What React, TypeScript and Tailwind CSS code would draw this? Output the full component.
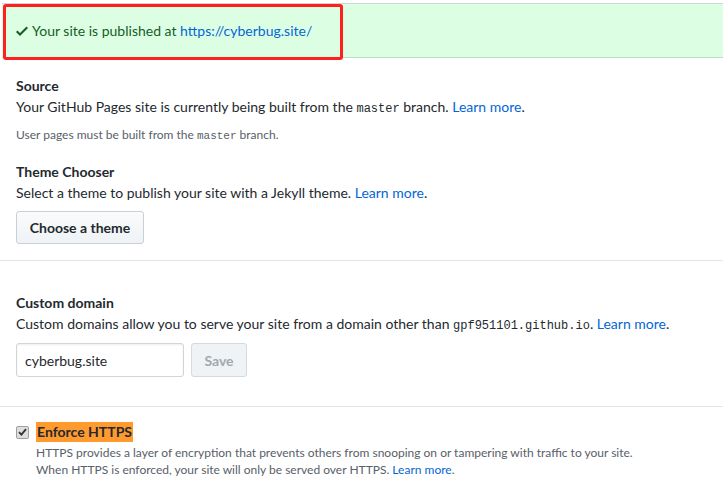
import React from "react";

const mono = "font-['Liberation_Mono',monospace] text-[12px] leading-none";

export default function App() {
  return (
    <div className="w-[723px] h-[496px] bg-white overflow-hidden text-[14px] text-[#24292e] font-['Lato',sans-serif]">
      <div className="pt-[3px]">
        <div className="relative ml-[2px] h-[55px] bg-[#dcffe4] border-t border-t-[#d1d5da] border-b border-b-[#bfdcc8] flex items-center pl-[14px] text-[#165c26]">
          <svg width="12" height="16" viewBox="0 0 12 16" className="mr-[4px] mt-[1px]" fill="#165c26">
            <path d="M12 5l-8 8-4-4 1.5-1.5L4 10l6.5-6.5L12 5z" />
          </svg>
          <span>
            Your site is published at{" "}
            <a className="text-[#0366d6]">https://cyberbug.site/</a>
          </span>
          <div className="absolute left-[1px] top-[0px] w-[340px] h-[56px] border-[3px] border-[#ff1f1f] rounded-[3px] pointer-events-none" />
        </div>
      </div>

      <div className="px-4 pt-[17px]">
        <div className="font-bold leading-[21px]">Source</div>
        <div className="leading-[21px]">
          Your GitHub Pages site is currently being built from the{" "}
          <span className={mono}>master</span> branch.{" "}
          <a className="text-[#0366d6]">Learn more</a>.
        </div>
        <div className="mt-[9px] text-[12px] leading-[18px] text-[#586069]">
          User pages must be built from the{" "}
          <span className="font-['Liberation_Mono',monospace] text-[11px] leading-none">master</span> branch.
        </div>

        <div className="mt-[17px] font-bold leading-[21px]">Theme Chooser</div>
        <div className="leading-[21px]">
          Select a theme to publish your site with a Jekyll theme.{" "}
          <a className="text-[#0366d6]">Learn more</a>.
        </div>
        <button className="mt-[8px] h-[33px] w-[128px] rounded-[3px] border border-[#cdcfd2] bg-gradient-to-b from-[#fafbfc] to-[#eff3f6] font-bold text-[14px] text-[#24292e]">
          Choose a theme
        </button>
      </div>

      <div className="mt-[16px] border-t border-[#e1e4e8]" />

      <div className="px-4 pt-[31px]">
        <div className="font-bold leading-[21px]">Custom domain</div>
        <div className="leading-[21px] whitespace-nowrap">
          Custom domains allow you to serve your site from a domain other than{" "}
          <span className={mono}>gpf951101.github.io</span>.{" "}
          <a className="text-[#0366d6]">Learn more</a>.
        </div>
        <div className="mt-[9px] flex gap-[7px]">
          <div className="h-[34px] w-[168px] rounded-[3px] border border-[#d1d5da] flex items-center px-[8px] shadow-[inset_0_1px_2px_rgba(27,31,35,0.075)]">
            cyberbug.site
          </div>
          <div className="h-[34px] w-[56px] rounded-[3px] border border-[#d7dadd] bg-[#eff3f6] flex items-center justify-center font-bold text-[#a3a8ad]">
            Save
          </div>
        </div>
      </div>

      <div className="mt-[29px] border-t border-[#e1e4e8]" />

      <div className="px-4 pt-[15px]">
        <div className="flex items-center">
          <div className="w-[13px] h-[13px] mr-[7px] rounded-[2px] border border-[#a0a0a0] bg-[#dedede] flex items-center justify-center">
            <svg width="9" height="8" viewBox="0 0 9 8">
              <path d="M1 4.2 L3.4 6.6 L8 1.2" stroke="#333" strokeWidth="1.8" fill="none" />
            </svg>
          </div>
          <span className="font-bold leading-[20px] bg-[#ff9a2e] px-[1px]">Enforce HTTPS</span>
        </div>
        <div className="pl-[20px] text-[12px] leading-[17px] text-[#586069] pt-[2px]">
          <div>
            HTTPS provides a layer of encryption that prevents others from snooping on or tampering with traffic to your site.
          </div>
          <div>
            When HTTPS is enforced, your site will only be served over HTTPS.{" "}
            <a className="text-[#0366d6]">Learn more</a>.
          </div>
        </div>
      </div>
    </div>
  );
}
